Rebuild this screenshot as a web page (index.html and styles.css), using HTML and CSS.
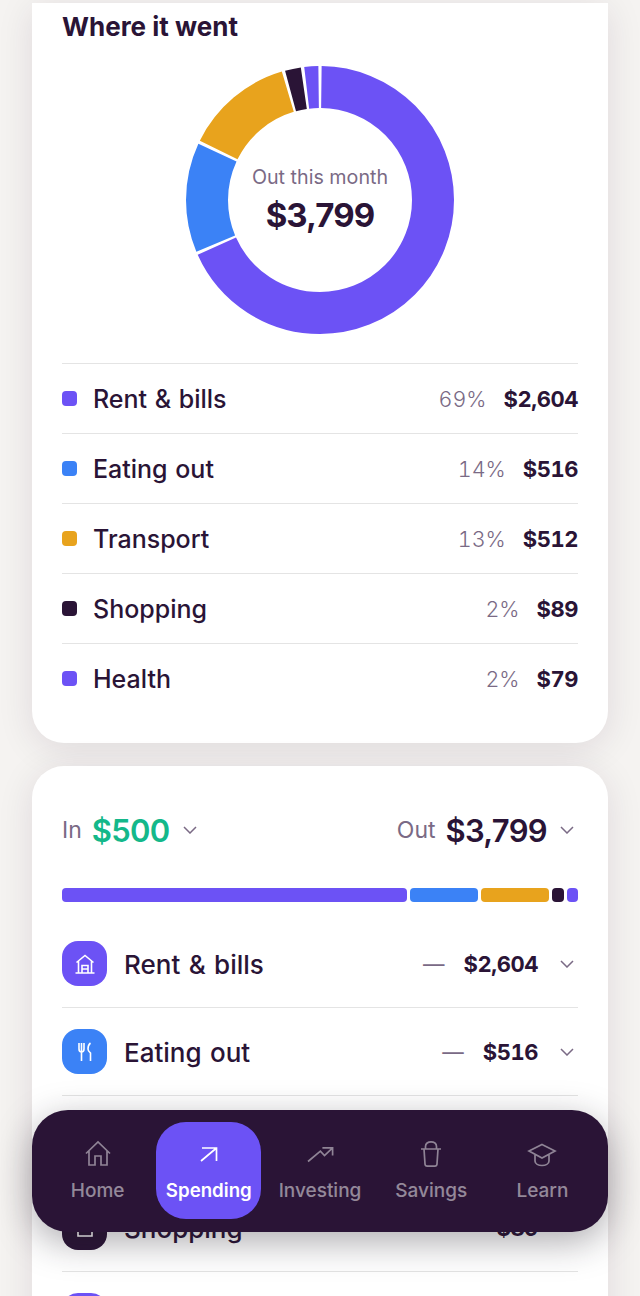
FILE: index.html
```html
<!DOCTYPE html>
<html lang="en">
<head>
<meta charset="utf-8">
<title>Spending</title>
<link rel="stylesheet" href="styles.css">
</head>
<body>
<main class="page">
  <section class="card card-top">
    <h2 class="title">Where it went</h2>
    <div class="donut">
      <svg class="donut-svg" viewBox="0 0 268 268" width="268" height="268">
        <g fill="none" stroke-width="42" transform="rotate(-90 134 134)">
          <circle cx="134" cy="134" r="113" pathLength="100" stroke="#6c52f5" stroke-dasharray="68.1 31.9" stroke-dashoffset="-0.2"/>
          <circle cx="134" cy="134" r="113" pathLength="100" stroke="#3b82f6" stroke-dasharray="13.2 86.8" stroke-dashoffset="-68.7"/>
          <circle cx="134" cy="134" r="113" pathLength="100" stroke="#e8a31d" stroke-dasharray="13.1 86.9" stroke-dashoffset="-82.3"/>
          <circle cx="134" cy="134" r="113" pathLength="100" stroke="#2a1436" stroke-dasharray="1.9 98.1" stroke-dashoffset="-95.8"/>
          <circle cx="134" cy="134" r="113" pathLength="100" stroke="#6c52f5" stroke-dasharray="1.7 98.3" stroke-dashoffset="-98.1"/>
        </g>
      </svg>
      <div class="donut-center">
        <span class="donut-label">Out this month</span>
        <span class="donut-value">$3,799</span>
      </div>
    </div>
    <ul class="legend">
      <li class="legend-row"><i class="dot purple"></i><span class="name">Rent &amp; bills</span><span class="pct">69%</span><span class="amt">$2,604</span></li>
      <li class="legend-row"><i class="dot blue"></i><span class="name">Eating out</span><span class="pct">14%</span><span class="amt">$516</span></li>
      <li class="legend-row"><i class="dot amber"></i><span class="name">Transport</span><span class="pct">13%</span><span class="amt">$512</span></li>
      <li class="legend-row"><i class="dot ink"></i><span class="name">Shopping</span><span class="pct">2%</span><span class="amt">$89</span></li>
      <li class="legend-row"><i class="dot purple"></i><span class="name">Health</span><span class="pct">2%</span><span class="amt">$79</span></li>
    </ul>
  </section>

  <section class="card card-bottom">
    <div class="totals">
      <div class="total">
        <span class="total-label">In</span><span class="total-value green">$500</span>
        <svg class="chev" viewBox="0 0 14 8" width="14" height="8"><path d="M1 1 7 7 13 1"/></svg>
      </div>
      <div class="total">
        <span class="total-label">Out</span><span class="total-value">$3,799</span>
        <svg class="chev" viewBox="0 0 14 8" width="14" height="8"><path d="M1 1 7 7 13 1"/></svg>
      </div>
    </div>
    <div class="stack">
      <i class="seg purple" style="flex-grow:345"></i>
      <i class="seg blue" style="flex-grow:68"></i>
      <i class="seg amber" style="flex-grow:68"></i>
      <i class="seg ink" style="flex-grow:12"></i>
      <i class="seg purple" style="flex-grow:11"></i>
    </div>
    <ul class="cats">
      <li class="cat">
        <span class="cat-icon purple">
          <svg viewBox="0 0 24 24" width="24" height="24"><path d="M3.500 10.500 12 3.500l8.500 7M5.500 9v12M18.500 9v12M2.500 21h19M9 21v-7.500h6V21M9 17h6"/></svg>
        </span>
        <span class="name">Rent &amp; bills</span><span class="dash">—</span><span class="amt">$2,604</span>
        <svg class="chev" viewBox="0 0 14 8" width="14" height="8"><path d="M1 1 7 7 13 1"/></svg>
      </li>
      <li class="cat">
        <span class="cat-icon blue">
          <svg viewBox="0 0 24 24" width="24" height="24"><path d="M6 3v6c0 2 1 3 2.500 3s2.500-1 2.500-3V3M8.500 3v18M17.500 3c-2 1.500-2.500 4-2.500 6 0 2 1.500 3 2.500 4v8"/></svg>
        </span>
        <span class="name">Eating out</span><span class="dash">—</span><span class="amt">$516</span>
        <svg class="chev" viewBox="0 0 14 8" width="14" height="8"><path d="M1 1 7 7 13 1"/></svg>
      </li>
      <li class="cat">
        <span class="cat-icon amber"></span>
        <span class="name">Transport</span><span class="dash">—</span><span class="amt">$512</span>
        <svg class="chev" viewBox="0 0 14 8" width="14" height="8"><path d="M1 1 7 7 13 1"/></svg>
      </li>
      <li class="cat">
        <span class="cat-icon ink">
          <svg viewBox="0 0 24 24" width="24" height="24"><path d="M5 8h14v12H5z"/></svg>
        </span>
        <span class="name">Shopping</span><span class="amt">$89</span>
        <svg class="chev" viewBox="0 0 14 8" width="14" height="8"><path d="M1 1 7 7 13 1"/></svg>
      </li>
      <li class="cat">
        <span class="cat-icon purple"></span>
      </li>
    </ul>
  </section>
</main>

<nav class="tabbar">
  <a class="tab">
    <svg viewBox="0 0 30 28" width="30" height="28"><path d="M3 13.500 15 2l12 11.500M6 11v14h6v-9h6v9h6V11"/></svg>
    <span>Home</span>
  </a>
  <a class="tab active">
    <svg viewBox="0 0 30 28" width="30" height="28"><path d="M7 21 22.500 8M8 8h14.500v13"/></svg>
    <span>Spending</span>
  </a>
  <a class="tab">
    <svg viewBox="0 0 30 28" width="30" height="28"><path d="M3 21.500 15.400 11.200l4.100 4.300 8.100-7.700M17.400 7.800h10.200v7.700"/></svg>
    <span>Investing</span>
  </a>
  <a class="tab">
    <svg viewBox="0 0 30 28" width="30" height="28"><path d="M5 9h20M8 9l1 15c.1 1.300 1 2.200 2.200 2.200h7.600c1.200 0 2.100-.9 2.200-2.200l1-15M9.500 9V6.500c0-3 2.500-4.700 5.500-4.700s5.500 1.700 5.500 4.700V9"/></svg>
    <span>Savings</span>
  </a>
  <a class="tab">
    <svg viewBox="0 0 30 28" width="30" height="28"><path d="M15 4.500 28 11l-13 7-13-7zM8 14.500V21c0 3 3.500 4.500 7 4.500s7-1.500 7-4.500v-6.500"/></svg>
    <span>Learn</span>
  </a>
</nav>
</body>
</html>
```
FILE: styles.css
```css
* { box-sizing: border-box; }
html, body { margin: 0; height: 100%; }
body {
  position: relative;
  height: 1296px;
  overflow: hidden;
  background: #f5f3f1;
  font-family: "Inter", "Liberation Sans", sans-serif;
  color: #2a1436;
}
.page {
  display: flex;
  flex-direction: column;
  gap: 23px;
  padding: 3px 32px 0;
}
.card {
  background: #fff;
  border-radius: 32px;
  padding: 0 30px;
  box-shadow: 0 6px 36px rgba(42, 20, 54, .11);
}
.card-top { height: 740px; border-radius: 0 0 32px 32px; }
.card-bottom { padding-top: 42px; height: 640px; }
.title {
  margin: 0;
  padding-top: 7px;
  font-size: 26px;
  line-height: 34px;
  font-weight: 700;
}
.donut {
  position: relative;
  width: 268px;
  height: 268px;
  margin: 22px auto 29px;
}
.donut-svg { display: block; }
.donut-center {
  position: absolute;
  inset: 4px 0 0;
  display: flex;
  flex-direction: column;
  align-items: center;
  justify-content: center;
}
.donut-label { font-size: 19.700px; line-height: 26px; color: #7a6a85; }
.donut-value { font-size: 33px; line-height: 50px; font-weight: 700; letter-spacing: -.9px; }
.legend, .cats { list-style: none; margin: 0; padding: 0; }
.legend-row {
  display: flex;
  align-items: center;
  height: 70px;
  border-top: 1px solid #e4e4e4;
}
.dot { width: 15px; height: 15px; border-radius: 4px; margin-right: 16px; }
.name { flex: 1; font-size: 25px; font-weight: 500; line-height: 32px; padding-top: 1px; word-spacing: 1px; }
.pct { font-size: 21.500px; font-weight: 300; color: #7a6a85; margin-right: 17px; font-variant-numeric: tabular-nums; }
.amt { font-size: 22px; font-weight: 700; letter-spacing: -.45px; padding-top: 1px; font-variant-numeric: tabular-nums; }
.purple { background: #6c52f5; }
.blue { background: #3b82f6; }
.amber { background: #e8a31d; }
.ink { background: #2a1436; }
.totals {
  display: flex;
  justify-content: space-between;
  align-items: center;
  height: 44px;
}
.total { display: flex; align-items: center; }
.total-label { font-size: 23px; color: #7a6a85; margin-right: 10px; }
.total-value { font-size: 31px; font-weight: 600; letter-spacing: -.7px; }
.green { color: #14b88a; }
.chev { fill: none; stroke: #7a6a85; stroke-width: 1.500; margin: 0 4px 0 13px; }
.stack {
  display: flex;
  gap: 3px;
  margin-top: 36px;
  height: 14px;
}
.seg { flex-basis: 0; border-radius: 4px; }
.cats { margin-top: 18px; }
.cat {
  display: flex;
  align-items: center;
  height: 88px;
  border-bottom: 1px solid #e4e4e4;
}
.cat .name { font-size: 26px; word-spacing: 1.500px; padding-top: 2px; }
.cat .chev { margin-left: 22px; }
.cat-icon {
  display: flex;
  align-items: center;
  justify-content: center;
  width: 45px;
  height: 45px;
  border-radius: 16px;
  margin-right: 17px;
}
.cat-icon svg { fill: none; stroke: #fff; stroke-width: 1.600; }
.dash { font-size: 21.500px; color: #7a6a85; margin-right: 19px; }
.tabbar {
  position: absolute;
  left: 32px;
  top: 1110px;
  width: 576px;
  height: 122px;
  display: flex;
  gap: 6px;
  padding: 12px 13px 13px;
  border-radius: 36px;
  background: #2a1436;
  box-shadow: 0 10px 36px rgba(30, 24, 36, .36);
}
.tab {
  flex: 1;
  display: flex;
  flex-direction: column;
  align-items: center;
  gap: 11px;
  padding-top: 18px;
  border-radius: 30px;
  font-size: 19px;
  font-weight: 500;
  color: rgba(255, 255, 255, .5);
}
.tab svg { fill: none; stroke: rgba(255, 255, 255, .48); stroke-width: 1.700; }
.tab.active { background: #6c52f5; color: #fff; font-size: 18.700px; font-weight: 600; }
.tab.active svg { stroke: #fff; }
```
